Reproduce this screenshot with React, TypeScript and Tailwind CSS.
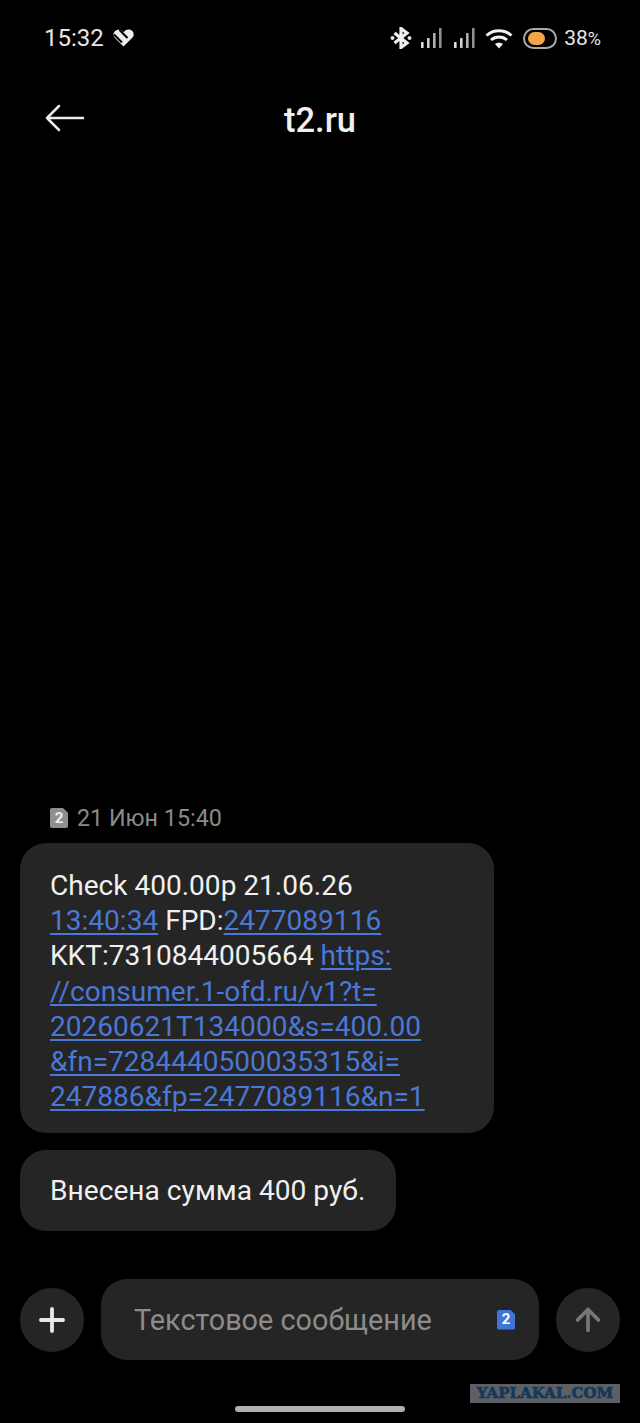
import { ArrowUp, Plus } from 'lucide-react'

function SimBadge({ className, textClassName }: { className: string; textClassName: string }) {
  return (
    <span
      className={`flex items-center justify-center font-bold [clip-path:polygon(0_0,72%_0,100%_24%,100%_100%,0_100%)] rounded-[2px] ${className} ${textClassName}`}
    >
      2
    </span>
  )
}

function Signal() {
  return (
    <svg width="21" height="21" viewBox="0 0 21 21">
      <rect x="0" y="14" width="2.600" height="6" rx="0.6" fill="#e0e0e0" />
      <rect x="6" y="10" width="2.600" height="10" rx="0.6" fill="#cfcfcf" />
      <rect x="12" y="5" width="2.600" height="15" rx="0.6" fill="#b0b0b0" />
      <rect x="18" y="0" width="2.600" height="20" rx="0.6" fill="#8f8f8f" />
    </svg>
  )
}

function StatusBar() {
  return (
    <div className="flex items-center justify-between h-[76px] pl-[44px] pr-[39px] text-[#e6e6e6]">
      <div className="flex items-center gap-[9px]">
        <span className="text-[24px] leading-none">15:32</span>
        <svg width="21" height="18" viewBox="0 0 21 18">
          <path
            d="M10.500 17.500L1.500 8.500C-1 5 1.500.5 6 .8c2 .2 3.500 1.200 4.500 2.700C11.500 1.800 13.500.6 15.500.6c4.500 0 6.800 4.700 4 8z"
            fill="#ededed"
          />
          <path d="M1 5.500l8 8M6.500 1l8 8" stroke="#000" strokeWidth="2" fill="none" />
        </svg>
      </div>
      <div className="flex items-center">
        <svg width="22" height="22" viewBox="0 0 22 22" fill="none" stroke="#f2f2f2" strokeWidth="3.200">
          <path d="M4.500 6l12.500 10-6 4.500V1.500L17 6 4.500 16" />
          <circle cx="2.500" cy="11" r="1.500" fill="#f2f2f2" strokeWidth="1" />
          <circle cx="19.500" cy="11" r="1.500" fill="#f2f2f2" strokeWidth="1" />
        </svg>
        <div className="flex items-center gap-[12px] ml-[9px] -mr-[1px]">
          <Signal />
          <Signal />
        </div>
        <svg className="ml-[11px]" width="28" height="21" viewBox="0 0 28 21" fill="none" stroke="#f2f2f2" strokeWidth="3">
          <path d="M1.500 7.500C8.500 1 19.500 1 26.500 7.500" />
          <path d="M6 12c4.500-4 11.500-4 16 0" />
          <path d="M14 20.500l-4-4.500c2.300-1.800 5.700-1.800 8 0z" fill="#f2f2f2" stroke="none" />
        </svg>
        <div className="ml-[10px] flex items-center h-[21px] w-[34px] rounded-full border-2 border-[#a8a8a8] pl-[3px]">
          <div className="h-[13px] w-[17px] rounded-full bg-[#f2a648]" />
        </div>
        <span className="ml-[7px] text-[21px] leading-none">
          38<span className="text-[18px]">%</span>
        </span>
      </div>
    </div>
  )
}

function Link({ children }: { children: string }) {
  return <span className="text-[#4a78d6] underline underline-offset-[3px] decoration-[1.500px]">{children}</span>
}

export default function App() {
  return (
    <div className="relative flex flex-col h-[1423px] w-[640px] overflow-hidden bg-black text-[#f0f0f0] font-['Roboto',sans-serif]">
      <StatusBar />

      {/* header */}
      <div className="relative flex items-center justify-center h-[88px]">
        <svg
          className="absolute left-[45px] top-[28px]"
          width="40"
          height="28"
          viewBox="0 0 40 28"
          fill="none"
          stroke="#ececec"
          strokeWidth="2.500"
          strokeLinecap="round"
          strokeLinejoin="round"
        >
          <path d="M38 14H2M14 2L2 14l12 12" />
        </svg>
        <h1 className="text-[34.500px] font-medium leading-none">t2.ru</h1>
      </div>

      {/* messages */}
      <div className="flex-1 flex flex-col justify-end items-start px-[20px]">
        <div className="flex items-center gap-[9px] pl-[30px] mb-[12px] text-[#8a8a8a]">
          <SimBadge
            className="w-[18px] h-[20px] bg-[#8f8f8f]"
            textClassName="text-[15px] text-[#eeeeee]"
          />
          <span className="text-[23.300px] leading-[26px]">21 Июн 15:40</span>
        </div>

        <div className="w-[474px] rounded-[26px] bg-[#252525] pl-[30px] pr-[20px] pt-[25px] pb-[9px] mb-[17px] text-[28.050px] leading-[35.200px] h-[290px]">
          Check 400.00р 21.06.26
          <br />
          <Link>13:40:34</Link> FPD:<Link>2477089116</Link>
          <br />
          KKT:7310844005664 <Link>https:</Link>
          <br />
          <Link>//consumer.1-ofd.ru/v1?t=</Link>
          <br />
          <Link>20260621T134000&s=400.00</Link>
          <br />
          <Link>&fn=7284440500035315&i=</Link>
          <br />
          <Link>247886&fp=2477089116&n=1</Link>
        </div>

        <div className="flex items-center h-[81px] w-[376px] rounded-[26px] bg-[#252525] pl-[30px] pt-[1px] text-[28.150px] mb-[48px]">
          Внесена сумма 400 руб.
        </div>
      </div>

      {/* composer */}
      <div className="flex items-center h-[81px] px-[20px]">
        <div className="flex items-center justify-center w-[64px] h-[64px] rounded-full bg-[#252525] text-[#e8e8e8]">
          <Plus size={38} strokeWidth={2.400} />
        </div>
        <div className="flex items-center justify-between h-[81px] w-[438px] ml-[17px] rounded-[26px] bg-[#252525] pl-[33px] pr-[24px]">
          <span className="pt-[2px] text-[28.800px] text-[#8c8c8c]">Текстовое сообщение</span>
          <SimBadge
            className="w-[18px] h-[20px] bg-[#3f74d8]"
            textClassName="text-[15px] text-white"
          />
        </div>
        <div className="flex items-center justify-center w-[64px] h-[64px] ml-[17px] rounded-full bg-[#252525] text-[#787878]">
          <ArrowUp size={36} strokeWidth={2.400} />
        </div>
      </div>

      {/* home bar */}
      <div className="flex justify-center pt-[46px] pb-[11px]">
        <div className="w-[170px] h-[6px] rounded-full bg-[#b0b0b0]" />
      </div>

      <div className="absolute left-[470px] top-[1384px] flex items-center justify-center w-[150px] h-[19px] bg-[#5c6064] text-[#14375a] [-webkit-text-stroke:0.6px_#14375a] font-['DejaVu_Serif',serif] font-bold text-[15px] leading-none">
        YAPLAKAL.COM
      </div>
    </div>
  )
}
